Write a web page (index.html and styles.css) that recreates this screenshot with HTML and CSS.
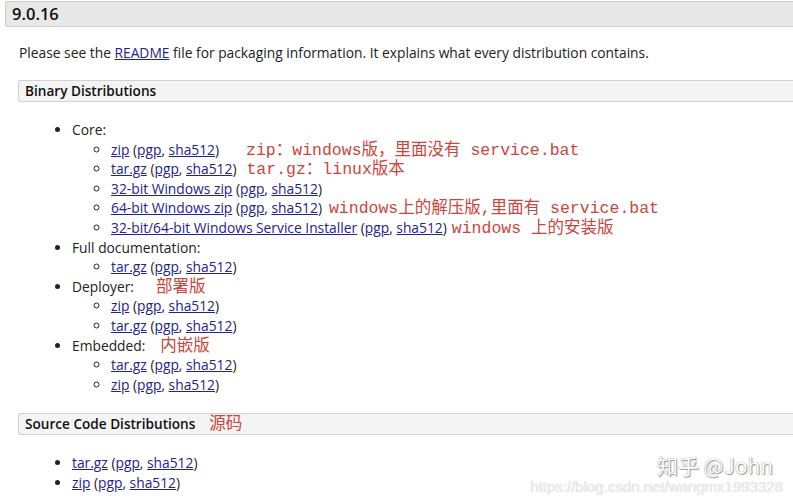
FILE: index.html
```html
<!DOCTYPE html>
<html>
<head>
<meta charset="utf-8">
<link rel="stylesheet" href="styles.css">
</head>
<body>
<div class="page">
  <h3 class="version">9.0.16</h3>
  <div class="section">
    <p class="intro">Please see the <a href="#">README</a> file for packaging information. It explains what every distribution contains.</p>
    <h4 class="subhead">Binary Distributions</h4>
    <ul class="main">
      <li>Core:
        <ul class="sub">
          <li><a href="#">zip</a> (<a href="#">pgp</a>, <a href="#">sha512</a>)<span class="note n1">zip：windows版，里面没有 service.bat</span></li>
          <li><a href="#">tar.gz</a> (<a href="#">pgp</a>, <a href="#">sha512</a>)<span class="note n2">tar.gz：linux版本</span></li>
          <li><a href="#">32-bit Windows zip</a> (<a href="#">pgp</a>, <a href="#">sha512</a>)</li>
          <li><a href="#">64-bit Windows zip</a> (<a href="#">pgp</a>, <a href="#">sha512</a>)<span class="note n3">windows上的解压版,里面有 service.bat</span></li>
          <li><a href="#">32-bit/64-bit Windows Service Installer</a> (<a href="#">pgp</a>, <a href="#">sha512</a>)<span class="note n4">windows 上的安装版</span></li>
        </ul>
      </li>
      <li>Full documentation:
        <ul class="sub">
          <li><a href="#">tar.gz</a> (<a href="#">pgp</a>, <a href="#">sha512</a>)</li>
        </ul>
      </li>
      <li>Deployer:<span class="note n5">部署版</span>
        <ul class="sub">
          <li><a href="#">zip</a> (<a href="#">pgp</a>, <a href="#">sha512</a>)</li>
          <li><a href="#">tar.gz</a> (<a href="#">pgp</a>, <a href="#">sha512</a>)</li>
        </ul>
      </li>
      <li>Embedded:<span class="note n6">内嵌版</span>
        <ul class="sub">
          <li><a href="#">tar.gz</a> (<a href="#">pgp</a>, <a href="#">sha512</a>)</li>
          <li><a href="#">zip</a> (<a href="#">pgp</a>, <a href="#">sha512</a>)</li>
        </ul>
      </li>
    </ul>
    <h4 class="subhead">Source Code Distributions<span class="note n7">源码</span></h4>
    <ul class="main">
      <li><a href="#">tar.gz</a> (<a href="#">pgp</a>, <a href="#">sha512</a>)</li>
      <li><a href="#">zip</a> (<a href="#">pgp</a>, <a href="#">sha512</a>)</li>
    </ul>
  </div>
  <div class="watermark">
    <div class="wm-zhihu">知乎 @John</div>
    <div class="wm-url">https://blog.csdn.net/wangmx1993328</div>
  </div>
</div>
</body>
</html>
```

FILE: styles.css
```css
html, body {
  margin: 0;
  padding: 0;
  background: #fff;
}
body {
  font-family: "Open Sans", "Noto Sans", sans-serif;
  font-size: 13.8px;
  color: #222;
  overflow: hidden;
}
.page {
  position: relative;
  height: 500px;
}
.version {
  margin: 1px 0 0 5px;
  height: 24px;
  line-height: 24px;
  padding-left: 6px;
  background: #e8e8e8;
  border: 1px solid #cdcdcd;
  border-right: none;
  border-radius: 3px 0 0 3px;
  font-size: 16.5px;
  font-weight: 600;
  color: #111;
}
.section {
  padding-left: 18px;
}
.intro {
  margin: 16px 0 17px 1px;
  line-height: 20px;
}
a {
  color: #23238e;
  text-decoration: underline;
}
.subhead {
  margin: 0;
  height: 20px;
  line-height: 20px;
  padding-left: 6px;
  background: #f4f4f4;
  border: 1px solid #d2d2d2;
  border-right: none;
  border-radius: 3px 0 0 3px;
  font-size: 13.6px;
  font-weight: 600;
  color: #111;
}
ul {
  margin: 0;
  padding: 0;
}
ul.main {
  list-style: disc;
  padding-left: 54px;
  margin: 18px 0 19px 0;
  line-height: 19.6px;
}
ul.sub {
  list-style: circle;
  padding-left: 39px;
  margin: 0;
}
.note {
  font-family: "Liberation Mono", "Noto Sans CJK SC", monospace;
  color: #c9463d;
  font-size: 16.5px;
  line-height: 10px;
  display: inline-block;
  vertical-align: baseline;
}
.n1 { margin-left: 27px; }
.n2 { margin-left: 10px; }
.n3 { margin-left: 7px; }
.n4 { margin-left: 5px; }
.n5 { margin-left: 22px; }
.n6 { margin-left: 15px; }
.n7 { margin-left: 14px; font-weight: normal; }
.watermark {
  position: absolute;
  right: 10px;
  top: 451px;
  text-align: right;
  color: #fff;
  text-shadow: 0 0 1px #777, 1px 1px 1px #999;
  font-family: "Noto Sans CJK SC", sans-serif;
}
.wm-zhihu {
  font-size: 21px;
  line-height: 27px;
  margin-right: 10px;
}
.wm-url {
  font-family: "Liberation Sans", sans-serif;
  font-size: 15px;
  line-height: 16px;
  color: #f2f2f2;
  text-shadow: 0 0 1px #bbb;
}
```
